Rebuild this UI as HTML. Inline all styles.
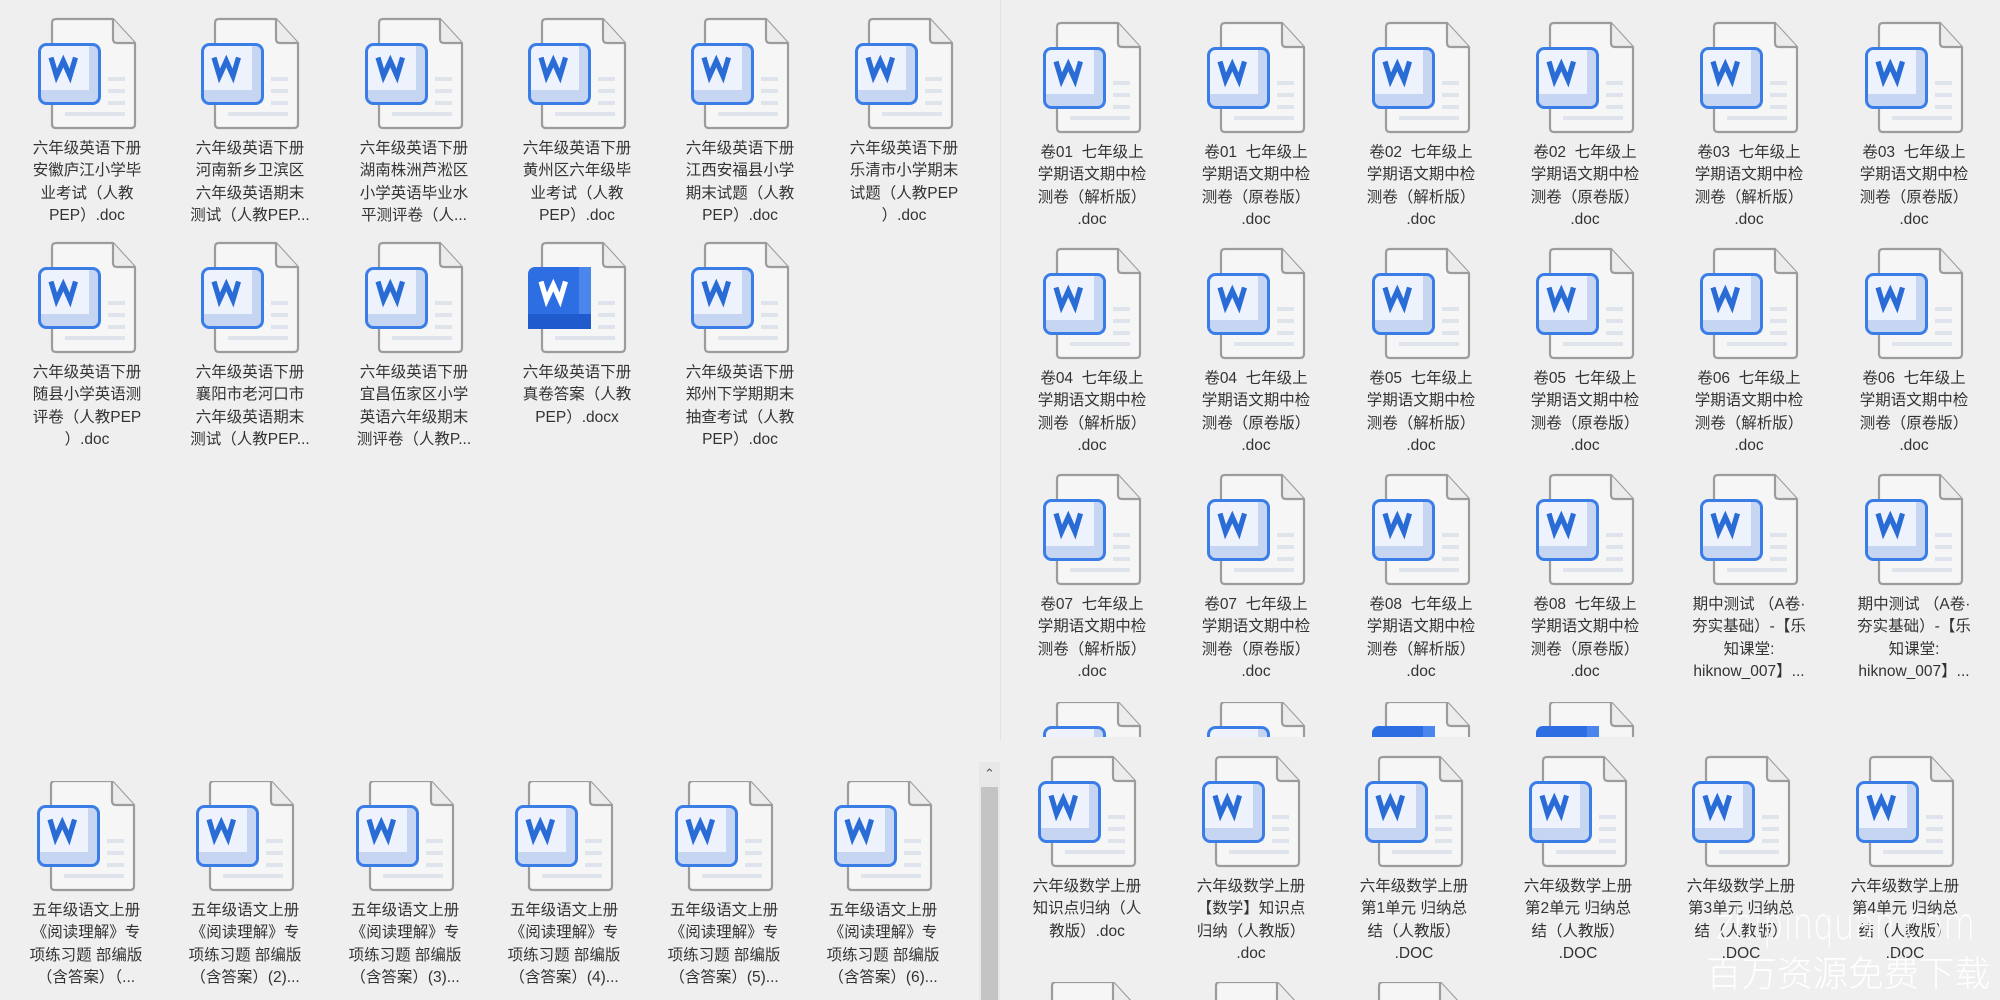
<!DOCTYPE html>
<html><head><meta charset="utf-8">
<style>
html,body{margin:0;padding:0;width:2000px;height:1000px;overflow:hidden;}
#root{position:relative;width:2000px;height:1000px;overflow:hidden;background:#efefef;font-family:"Liberation Sans","Noto Sans CJK SC",sans-serif;}
.it{position:absolute;width:150px;height:230px;}
.it svg{position:absolute;left:24px;top:-2px;width:102px;height:114px;}
.it .t{position:absolute;left:-5px;width:160px;top:119px;text-align:center;font-size:15.5px;line-height:22.4px;color:#333;white-space:nowrap;}
.cut{height:18px;overflow:hidden;}
#tr{position:absolute;left:1001px;top:0;width:999px;height:737px;overflow:hidden;}
#tr .it{margin-left:-1001px;}
#tr .cut{height:36px;}
#div{position:absolute;left:1000px;top:0;width:1px;height:740px;background:#e2e2e2;}
#sb{position:absolute;left:979px;top:762px;width:21px;height:238px;background:#e8e8e8;}
#sb .th{position:absolute;left:2px;top:25px;width:17px;height:213px;background:#c4c4c4;}
#sb .ar{position:absolute;left:0;top:4px;width:21px;text-align:center;font-size:13px;line-height:16px;color:#555;}
.wm1{position:absolute;left:1716px;top:903px;font-size:44px;line-height:1;color:rgba(255,255,255,0.93);font-family:"DejaVu Sans","Liberation Sans",sans-serif;font-weight:200;transform:scaleX(0.74);transform-origin:left top;white-space:nowrap;}
.wm2{position:absolute;left:1706px;top:954px;font-size:35.5px;line-height:1;color:rgba(255,255,255,0.95);font-family:"Noto Sans CJK SC",sans-serif;font-weight:300;white-space:nowrap;}
</style></head><body><div id="root">
<svg width="0" height="0" style="position:absolute">
<defs>
<symbol id="d" viewBox="-16 -2 102 114">
<path d="M4 0 H61 L83 24 V105 Q83 109 79 109 H4 Q0 109 0 105 V4 Q0 0 4 0 Z" fill="#f6f6f6" stroke="#9c9c9c" stroke-width="2.2"/>
<path d="M61 0 V20 Q61 24 65 24 H83" fill="#ececec" stroke="#9c9c9c" stroke-width="2.2"/>
<rect x="56" y="58" width="17" height="4" fill="#dfe4ec"/>
<rect x="56" y="70" width="17" height="4" fill="#dfe4ec"/>
<rect x="56" y="82" width="17" height="4" fill="#dfe4ec"/>
<rect x="13" y="93" width="60" height="4" fill="#dfe4ec"/>
<rect x="-12.5" y="25.5" width="60" height="59" rx="7" fill="#edf2fc"/>
<rect x="37" y="26.5" width="10.5" height="57" fill="#c5d5f2"/>
<rect x="-11.5" y="71" width="59" height="13" fill="#c5d5f2"/>
<rect x="-12.5" y="25.5" width="60" height="59" rx="7" fill="none" stroke="#3b7de6" stroke-width="3"/>
<polyline points="-1,38.5 4.5,57 11.3,42 18,57 23.5,38.5" fill="none" stroke="#2a6cd6" stroke-width="5.2" stroke-linejoin="miter"/>
</symbol>
<symbol id="x" viewBox="-16 -2 102 114">
<path d="M4 0 H61 L83 24 V105 Q83 109 79 109 H4 Q0 109 0 105 V4 Q0 0 4 0 Z" fill="#f6f6f6" stroke="#9c9c9c" stroke-width="2.2"/>
<path d="M61 0 V20 Q61 24 65 24 H83" fill="#ececec" stroke="#9c9c9c" stroke-width="2.2"/>
<rect x="56" y="58" width="17" height="4" fill="#dfe4ec"/>
<rect x="56" y="70" width="17" height="4" fill="#dfe4ec"/>
<rect x="56" y="82" width="17" height="4" fill="#dfe4ec"/>
<rect x="13" y="93" width="60" height="4" fill="#dfe4ec"/>
<rect x="-14" y="24" width="63" height="62" rx="7" fill="#2d6fe3"/>
<rect x="37" y="24" width="12" height="62" fill="#4a86ec"/>
<rect x="-14" y="71" width="63" height="15" fill="#1f5bcc"/>
<polyline points="-1,38.5 4.5,57 11.3,42 18,57 23.5,38.5" fill="none" stroke="#ffffff" stroke-width="5.2"/>
</symbol>
</defs></svg>

<div class="it" style="left:12px;top:19px"><svg><use href="#d"/></svg><div class="t">六年级英语下册<br>安徽庐江小学毕<br>业考试（人教<br>PEP）.doc</div></div>
<div class="it" style="left:175px;top:19px"><svg><use href="#d"/></svg><div class="t">六年级英语下册<br>河南新乡卫滨区<br>六年级英语期末<br>测试（人教PEP...</div></div>
<div class="it" style="left:339px;top:19px"><svg><use href="#d"/></svg><div class="t">六年级英语下册<br>湖南株洲芦淞区<br>小学英语毕业水<br>平测评卷（人...</div></div>
<div class="it" style="left:502px;top:19px"><svg><use href="#d"/></svg><div class="t">六年级英语下册<br>黄州区六年级毕<br>业考试（人教<br>PEP）.doc</div></div>
<div class="it" style="left:665px;top:19px"><svg><use href="#d"/></svg><div class="t">六年级英语下册<br>江西安福县小学<br>期末试题（人教<br>PEP）.doc</div></div>
<div class="it" style="left:829px;top:19px"><svg><use href="#d"/></svg><div class="t">六年级英语下册<br>乐清市小学期末<br>试题（人教PEP<br>）.doc</div></div>
<div class="it" style="left:12px;top:243px"><svg><use href="#d"/></svg><div class="t">六年级英语下册<br>随县小学英语测<br>评卷（人教PEP<br>）.doc</div></div>
<div class="it" style="left:175px;top:243px"><svg><use href="#d"/></svg><div class="t">六年级英语下册<br>襄阳市老河口市<br>六年级英语期末<br>测试（人教PEP...</div></div>
<div class="it" style="left:339px;top:243px"><svg><use href="#d"/></svg><div class="t">六年级英语下册<br>宜昌伍家区小学<br>英语六年级期末<br>测评卷（人教P...</div></div>
<div class="it" style="left:502px;top:243px"><svg><use href="#x"/></svg><div class="t">六年级英语下册<br>真卷答案（人教<br>PEP）.docx</div></div>
<div class="it" style="left:665px;top:243px"><svg><use href="#d"/></svg><div class="t">六年级英语下册<br>郑州下学期期末<br>抽查考试（人教<br>PEP）.doc</div></div>

<div id="div"></div>

<div id="tr">
<div class="it" style="left:1017px;top:23px"><svg><use href="#d"/></svg><div class="t">卷01&nbsp; 七年级上<br>学期语文期中检<br>测卷（解析版）<br>.doc</div></div>
<div class="it" style="left:1181px;top:23px"><svg><use href="#d"/></svg><div class="t">卷01&nbsp; 七年级上<br>学期语文期中检<br>测卷（原卷版）<br>.doc</div></div>
<div class="it" style="left:1346px;top:23px"><svg><use href="#d"/></svg><div class="t">卷02&nbsp; 七年级上<br>学期语文期中检<br>测卷（解析版）<br>.doc</div></div>
<div class="it" style="left:1510px;top:23px"><svg><use href="#d"/></svg><div class="t">卷02&nbsp; 七年级上<br>学期语文期中检<br>测卷（原卷版）<br>.doc</div></div>
<div class="it" style="left:1674px;top:23px"><svg><use href="#d"/></svg><div class="t">卷03&nbsp; 七年级上<br>学期语文期中检<br>测卷（解析版）<br>.doc</div></div>
<div class="it" style="left:1839px;top:23px"><svg><use href="#d"/></svg><div class="t">卷03&nbsp; 七年级上<br>学期语文期中检<br>测卷（原卷版）<br>.doc</div></div>

<div class="it" style="left:1017px;top:249px"><svg><use href="#d"/></svg><div class="t">卷04&nbsp; 七年级上<br>学期语文期中检<br>测卷（解析版）<br>.doc</div></div>
<div class="it" style="left:1181px;top:249px"><svg><use href="#d"/></svg><div class="t">卷04&nbsp; 七年级上<br>学期语文期中检<br>测卷（原卷版）<br>.doc</div></div>
<div class="it" style="left:1346px;top:249px"><svg><use href="#d"/></svg><div class="t">卷05&nbsp; 七年级上<br>学期语文期中检<br>测卷（解析版）<br>.doc</div></div>
<div class="it" style="left:1510px;top:249px"><svg><use href="#d"/></svg><div class="t">卷05&nbsp; 七年级上<br>学期语文期中检<br>测卷（原卷版）<br>.doc</div></div>
<div class="it" style="left:1674px;top:249px"><svg><use href="#d"/></svg><div class="t">卷06&nbsp; 七年级上<br>学期语文期中检<br>测卷（解析版）<br>.doc</div></div>
<div class="it" style="left:1839px;top:249px"><svg><use href="#d"/></svg><div class="t">卷06&nbsp; 七年级上<br>学期语文期中检<br>测卷（原卷版）<br>.doc</div></div>

<div class="it" style="left:1017px;top:475px"><svg><use href="#d"/></svg><div class="t">卷07&nbsp; 七年级上<br>学期语文期中检<br>测卷（解析版）<br>.doc</div></div>
<div class="it" style="left:1181px;top:475px"><svg><use href="#d"/></svg><div class="t">卷07&nbsp; 七年级上<br>学期语文期中检<br>测卷（原卷版）<br>.doc</div></div>
<div class="it" style="left:1346px;top:475px"><svg><use href="#d"/></svg><div class="t">卷08&nbsp; 七年级上<br>学期语文期中检<br>测卷（解析版）<br>.doc</div></div>
<div class="it" style="left:1510px;top:475px"><svg><use href="#d"/></svg><div class="t">卷08&nbsp; 七年级上<br>学期语文期中检<br>测卷（原卷版）<br>.doc</div></div>
<div class="it" style="left:1674px;top:475px"><svg><use href="#d"/></svg><div class="t">期中测试 （A卷·<br>夯实基础）-【乐<br>知课堂:<br>hiknow_007】...</div></div>
<div class="it" style="left:1839px;top:475px"><svg><use href="#d"/></svg><div class="t">期中测试 （A卷·<br>夯实基础）-【乐<br>知课堂:<br>hiknow_007】...</div></div>

<div class="it cut" style="left:1017px;top:702px"><svg><use href="#d"/></svg></div>
<div class="it cut" style="left:1181px;top:702px"><svg><use href="#d"/></svg></div>
<div class="it cut" style="left:1346px;top:702px"><svg><use href="#x"/></svg></div>
<div class="it cut" style="left:1510px;top:702px"><svg><use href="#x"/></svg></div>
</div>

<div class="it" style="left:11px;top:781px;height:219px;overflow:hidden"><svg><use href="#d"/></svg><div class="t">五年级语文上册<br>《阅读理解》专<br>项练习题 部编版<br>（含答案）（...</div></div>
<div class="it" style="left:170px;top:781px;height:219px;overflow:hidden"><svg><use href="#d"/></svg><div class="t">五年级语文上册<br>《阅读理解》专<br>项练习题 部编版<br>（含答案）(2)...</div></div>
<div class="it" style="left:330px;top:781px;height:219px;overflow:hidden"><svg><use href="#d"/></svg><div class="t">五年级语文上册<br>《阅读理解》专<br>项练习题 部编版<br>（含答案）(3)...</div></div>
<div class="it" style="left:489px;top:781px;height:219px;overflow:hidden"><svg><use href="#d"/></svg><div class="t">五年级语文上册<br>《阅读理解》专<br>项练习题 部编版<br>（含答案）(4)...</div></div>
<div class="it" style="left:649px;top:781px;height:219px;overflow:hidden"><svg><use href="#d"/></svg><div class="t">五年级语文上册<br>《阅读理解》专<br>项练习题 部编版<br>（含答案）(5)...</div></div>
<div class="it" style="left:808px;top:781px;height:219px;overflow:hidden"><svg><use href="#d"/></svg><div class="t">五年级语文上册<br>《阅读理解》专<br>项练习题 部编版<br>（含答案）(6)...</div></div>

<div id="sb"><div class="ar">&#8963;</div><div class="th"></div></div>

<div class="it" style="left:1012px;top:757px;height:225px"><svg><use href="#d"/></svg><div class="t">六年级数学上册<br>知识点归纳（人<br>教版）.doc</div></div>
<div class="it" style="left:1176px;top:757px;height:225px"><svg><use href="#d"/></svg><div class="t">六年级数学上册<br>【数学】知识点<br>归纳（人教版）<br>.doc</div></div>
<div class="it" style="left:1339px;top:757px;height:225px"><svg><use href="#d"/></svg><div class="t">六年级数学上册<br>第1单元 归纳总<br>结（人教版）<br>.DOC</div></div>
<div class="it" style="left:1503px;top:757px;height:225px"><svg><use href="#d"/></svg><div class="t">六年级数学上册<br>第2单元 归纳总<br>结（人教版）<br>.DOC</div></div>
<div class="it" style="left:1666px;top:757px;height:225px"><svg><use href="#d"/></svg><div class="t">六年级数学上册<br>第3单元 归纳总<br>结（人教版）<br>.DOC</div></div>
<div class="it" style="left:1830px;top:757px;height:225px"><svg><use href="#d"/></svg><div class="t">六年级数学上册<br>第4单元 归纳总<br>结（人教版）<br>.DOC</div></div>
<div class="it cut" style="left:1012px;top:982px"><svg><use href="#d"/></svg></div>
<div class="it cut" style="left:1176px;top:982px"><svg><use href="#d"/></svg></div>
<div class="it cut" style="left:1339px;top:982px"><svg><use href="#d"/></svg></div>

<div class="wm1">zhipinquan.com</div>
<div class="wm2">百万资源免费下载</div>
</div></body></html>
